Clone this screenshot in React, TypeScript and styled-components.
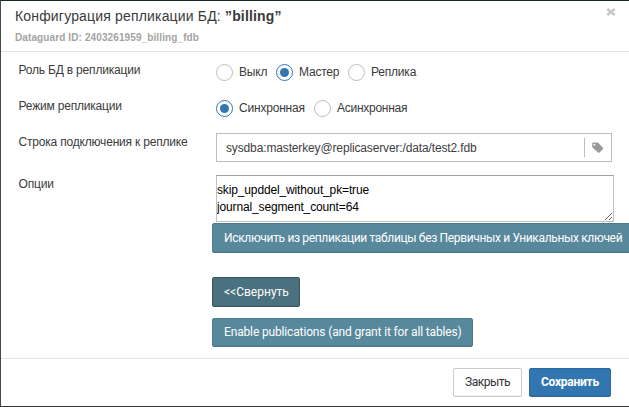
import React from 'react';
import styled, { createGlobalStyle, css } from 'styled-components';

const GlobalStyle = createGlobalStyle`
  * { box-sizing: border-box; }
  body { margin: 0; overflow: hidden; background: #3a3a3c; }
`;

const Dialog = styled.main`
  display: flex;
  flex-direction: column;
  width: 629px;
  height: 407px;
  border: solid;
  border-width: 1px 0 1px 1px;
  border-color: #18252a #000 #38383a #48484b;
  background: #fff;
  color: #3a3a3a;
  font: 12px/18px "Liberation Sans", Arial, sans-serif;
  white-space: nowrap;
  overflow: hidden;
`;

const Header = styled.header`
  display: flex;
  justify-content: space-between;
  flex: none;
  height: 51px;
  padding: 5px 13px 0 14px;
  border-bottom: 1px solid #e5e5e5;
`;

const Title = styled.h1`
  margin: 0;
  font-size: 14px;
  line-height: 20px;
  font-weight: 400;
  letter-spacing: 0.17px;
`;

const Subtitle = styled.div`
  margin-top: 3px;
  font-size: 10px;
  line-height: 18px;
  font-weight: 700;
  letter-spacing: 0.11px;
  color: #a3a3a3;
`;

const Close = styled.button`
  width: 10px;
  height: 12px;
  padding: 0;
  border: 0;
  background: none;
  svg { display: block; }
`;

const Form = styled.form`
  display: grid;
  grid-template-columns: 197px 1fr;
  grid-template-rows: 36px 33px 42px 47px auto;
  flex: none;
  height: 306px;
  padding: 12px 0 0 18px;
`;

const Label = styled.label<{ $raised?: boolean }>`
  margin: ${({ $raised }) => ($raised ? -3 : 0)}px 0 0 -0.5px;
  letter-spacing: -0.19px;
`;

const RadioGroup = styled.div`
  display: flex;
  align-items: flex-start;
`;

const Choice = styled.label<{ $width: number; $spacing?: number }>`
  display: flex;
  gap: 6px;
  width: ${({ $width }) => $width}px;
  line-height: 17px;
  letter-spacing: ${({ $spacing = -0.2 }) => $spacing}px;
`;

const Circle = styled.span<{ $on?: boolean }>`
  flex: none;
  display: grid;
  place-items: center;
  width: 17px;
  height: 17px;
  border: 1px solid ${({ $on }) => ($on ? '#3276b1' : '#bdbdbd')};
  border-radius: 50%;
  ${({ $on }) => $on && css`
    &::after {
      content: '';
      width: 9px;
      height: 9px;
      border-radius: 50%;
      background: #3276b1;
    }
  `}
`;

const Connection = styled.div`
  display: flex;
  align-items: center;
  width: 396px;
  height: 29px;
  border: 1px solid #bdbdbd;
  padding-left: 9px;
  letter-spacing: -0.14px;
  color: #404040;
`;

const TagAddon = styled.span`
  display: flex;
  align-items: center;
  width: 27px;
  height: 19px;
  margin-left: auto;
  padding-left: 7px;
  border-left: 1px solid #bdbdbd;
`;

const Options = styled.textarea`
  display: block;
  width: 398px;
  height: 47px;
  margin: 0;
  padding: 6px 0 0;
  border: 1px solid #c1c1c1;
  border-top-color: #a0a0a0;
  border-radius: 0;
  font: 12px/17px "Liberation Sans", Arial, sans-serif;
  letter-spacing: -0.14px;
  color: #000;
  overflow: hidden;
  resize: vertical;
  outline: none;
`;

const Actions = styled.div`
  display: flex;
  flex-direction: column;
  align-items: flex-start;
  grid-column: 2;
  margin-left: -4px;
  padding-top: 1px;
`;

const Button = styled.button<{ $tone: 'teal' | 'dark' | 'white' | 'blue'; $w: number; $h?: number; $top?: number; $spacing?: number }>`
  flex: none;
  width: ${({ $w }) => $w}px;
  height: ${({ $h = 29 }) => $h}px;
  margin: ${({ $top = 0 }) => $top}px 0 0;
  padding: 0 0 1px 11px;
  border: 1px solid;
  border-radius: 2px;
  box-shadow: inset 0 -1px 0 rgba(0, 0, 0, 0.05);
  font: ${({ $tone }) => ($tone === 'blue' ? 700 : 400)} 12px/18px Roboto, Arial, sans-serif;
  letter-spacing: ${({ $spacing = 0 }) => $spacing}px;
  text-align: left;
  white-space: nowrap;
  ${({ $tone }) => ({
    teal: css`background: #57889c; border-color: #4e7a8c; color: #fff;`,
    dark: css`background: #4a7180; border-color: #38555f; color: #fff;`,
    white: css`background: #fff; border-color: #ccc; color: #333;`,
    blue: css`background: #3276b1; border-color: #2c699d; color: #fff;`,
  })[$tone]}
`;

const Footer = styled.footer`
  display: flex;
  justify-content: flex-end;
  gap: 7px;
  flex: 1;
  padding: 9px 18px 0 0;
  border-top: 1px solid #e5e5e5;
`;

export default function App() {
  return (
    <>
      <GlobalStyle />
      <Dialog>
        <Header>
          <div>
            <Title>Конфигурация репликации БД: <b>”billing”</b></Title>
            <Subtitle>Dataguard ID: 2403261959_billing_fdb</Subtitle>
          </div>
          <Close type="button" aria-label="Закрыть">
            <svg width="10" height="12" viewBox="0 0 10 12"><path d="M1.3 3L8.7 9M8.7 3L1.3 9" stroke="#c8c8c8" strokeWidth="2.4" /></svg>
          </Close>
        </Header>
        <Form>
          <Label $raised>Роль БД в репликации</Label>
          <RadioGroup>
            <Choice $width={60}><Circle />Выкл</Choice>
            <Choice $width={72}><Circle $on />Мастер</Choice>
            <Choice $width={80}><Circle />Реплика</Choice>
          </RadioGroup>
          <Label $raised>Режим репликации</Label>
          <RadioGroup>
            <Choice $width={98}><Circle $on />Синхронная</Choice>
            <Choice $width={100} $spacing={-0.27}><Circle />Асинхронная</Choice>
          </RadioGroup>
          <Label>Строка подключения к реплике</Label>
          <Connection>
            sysdba:masterkey@replicaserver:/data/test2.fdb
            <TagAddon>
              <svg width="12" height="12" viewBox="0 0 12 12"><path fillRule="evenodd" d="M.2 1.7Q.2.5 1.4.5H5Q5.8.5 6.4 1.1L11 5.7Q11.7 6.4 11 7.1L7.5 10.6Q6.8 11.3 6.1 10.6L.8 5.8Q.2 5.2.2 4.4ZM2.4 1.7A1 1 0 1 0 2.4 3.7A1 1 0 1 0 2.4 1.7Z" fill="#999" /></svg>
            </TagAddon>
          </Connection>
          <Label>Опции</Label>
          <Options defaultValue={'skip_upddel_without_pk=true\njournal_segment_count=64'} spellCheck={false} />
          <Actions>
            <Button type="button" $tone="teal" $w={430} $h={30} $spacing={-0.34}>Исключить из репликации таблицы без Первичных и Уникальных ключей</Button>
            <Button type="button" $tone="dark" $w={88} $h={30} $top={24}>&lt;&lt;Свернуть</Button>
            <Button type="button" $tone="teal" $w={261} $top={11} $spacing={-0.15}>Enable publications (and grant it for all tables)</Button>
          </Actions>
        </Form>
        <Footer>
          <Button type="button" $tone="white" $w={69} $spacing={-0.5}>Закрыть</Button>
          <Button type="button" $tone="blue" $w={82} $spacing={-0.25}>Сохранить</Button>
        </Footer>
      </Dialog>
    </>
  );
}
